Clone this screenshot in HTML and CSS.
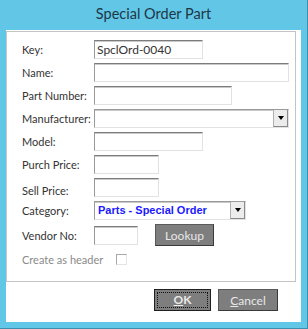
FILE: index.html
```html
<html>

<head>
  <meta name="viewport" content="width=device-width, initial-scale=1.0">
  <link rel="stylesheet" href="styles.css">
</head>

<body>
  <div class="window">
    <div class="title">Special Order Part</div>
    <div class="client">
      <div class="panel">
        <div class="row">
          <span class="label">Key:</span>
          <div class="field w-key">SpclOrd-0040</div>
        </div>
        <div class="row">
          <span class="label">Name:</span>
          <div class="field w-name"></div>
        </div>
        <div class="row">
          <span class="label">Part Number:</span>
          <div class="field w-part"></div>
        </div>
        <div class="row">
          <span class="label">Manufacturer:</span>
          <div class="field combo w-name">
            <span class="drop"><span class="arrow"></span></span>
          </div>
        </div>
        <div class="row">
          <span class="label">Model:</span>
          <div class="field w-key"></div>
        </div>
        <div class="row">
          <span class="label">Purch Price:</span>
          <div class="field w-price"></div>
        </div>
        <div class="row">
          <span class="label label-low">Sell Price:</span>
          <div class="field w-price"></div>
        </div>
        <div class="row row-cat">
          <span class="label">Category:</span>
          <div class="field combo w-cat">
            <span class="cat-text">Parts - Special Order</span>
            <span class="drop"><span class="arrow"></span></span>
          </div>
        </div>
        <div class="row row-vendor">
          <span class="label">Vendor No:</span>
          <div class="field w-vendor"></div>
          <button class="btn btn-lookup">Lookup</button>
        </div>
        <div class="row row-check">
          <span class="label label-off">Create as header</span>
          <span class="check"></span>
        </div>
      </div>
      <div class="actions">
        <button class="btn btn-ok"><span class="focus"><u>O</u>K</span></button>
        <button class="btn btn-cancel"><u>C</u>ancel</button>
      </div>
    </div>
  </div>
</body>

</html>
```

FILE: styles.css
```css
body {
  margin: 0;
  font-family: Lato, "Noto Sans", Arial, sans-serif;
  font-size: 12px;
  color: #333;
}

.window {
  width: 308px;
  height: 329px;
  box-sizing: border-box;
  background-color: #62c6e6;
  border-right: 1px solid #3d8fb0;
  border-bottom: 1px solid #3d8fb0;
}

.title {
  height: 30px;
  line-height: 28px;
  text-align: center;
  font-size: 14.5px;
  color: #1d3746;
}

.client {
  margin-left: 6px;
  width: 295px;
  height: 292px;
  background: white;
  padding-top: 1px;
  box-sizing: border-box;
}

.panel {
  width: 290px;
  height: 251px;
  box-sizing: border-box;
  border: 1px solid #c4c4c4;
  padding: 8px 0 0 15px;
}

.row {
  display: flex;
  align-items: center;
  height: 19px;
  margin-bottom: 4px;
}

.row-cat {
  margin-top: 1px;
}

.row-vendor {
  height: 22px;
  margin-top: 2px;
}

.row-check {
  height: 12px;
  margin-top: 7px;
}

.label {
  width: 72px;
  flex-shrink: 0;
  white-space: nowrap;
  font-size: 11px;
}

.label-low {
  padding-top: 5px;
}

.label-off {
  width: 94px;
  color: #8a8a8a;
}

.field {
  height: 19px;
  box-sizing: border-box;
  border: 1px solid #e2e2e2;
  border-top: 1px solid #7c7c7c;
  border-left: 1px solid #9a9a9a;
  box-shadow: inset 0 1px 0 #c9c9c9;
  padding-left: 2px;
  line-height: 17px;
  position: relative;
}

.w-key { width: 109px; }
.w-name { width: 195px; }
.w-part { width: 138px; }
.w-price { width: 65px; }
.w-cat { width: 152px; }
.w-vendor { width: 44px; }

.combo {
  border: 1px solid #9a9a9a;
  border-right-color: #e2e2e2;
  border-bottom-color: #e2e2e2;
  display: flex;
  align-items: center;
}

.drop {
  position: absolute;
  right: 0;
  top: 0;
  width: 15px;
  height: 17px;
  box-sizing: border-box;
  background: #ececec;
  border-left: 1px solid #b0b0b0;
  border-bottom: 1px solid #8a8a8a;
  border-right: 1px solid #8a8a8a;
  display: flex;
  align-items: center;
  justify-content: center;
}

.arrow {
  width: 0;
  height: 0;
  border-left: 3px solid transparent;
  border-right: 3px solid transparent;
  border-top: 4px solid #000;
}

.cat-text {
  font-family: "Liberation Sans", Arial, sans-serif;
  font-weight: bold;
  font-size: 11px;
  color: #1a1aff;
  padding-left: 1px;
}

.check {
  width: 11px;
  height: 11px;
  box-sizing: border-box;
  border: 1px solid #a8a8a8;
  border-right-color: #e4e4e4;
  border-bottom-color: #e4e4e4;
}

.btn {
  font-family: Lato, "Noto Sans", Arial, sans-serif;
  font-size: 12px;
  color: #e8e8e8;
  background-color: #7e7e7e;
  border: 1px solid #3a3a3a;
  border-top-color: #5a5a5a;
  border-left-color: #5a5a5a;
  padding: 0;
  height: 22px;
  box-sizing: border-box;
}

.btn-lookup {
  width: 59px;
  margin-left: 17px;
}

.actions {
  display: flex;
  justify-content: flex-end;
  gap: 7px;
  padding: 7px 23px 0 0;
}

.btn-ok {
  width: 57px;
  border: 1px solid #202020;
  font-weight: bold;
  padding: 2px;
}

.btn-ok .focus {
  display: block;
  height: 100%;
  box-sizing: border-box;
  border: 1px dotted #111;
  line-height: 14px;
}

.btn-cancel {
  width: 60px;
}
```
